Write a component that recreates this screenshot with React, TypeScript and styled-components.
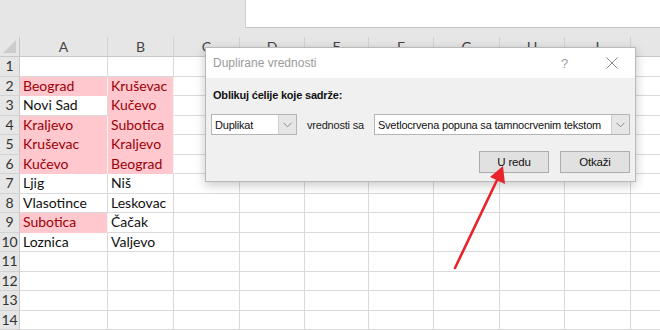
import React from "react";
import styled, { createGlobalStyle } from "styled-components";

const Global = createGlobalStyle`
  html, body { margin: 0; padding: 0; background: #fff; }
  * { box-sizing: border-box; }
`;

const Page = styled.div`
  position: relative;
  width: 660px;
  height: 330px;
  overflow: hidden;
  background: #fff;
  font-family: Lato, "Liberation Sans", sans-serif;
`;

const TopStrip = styled.div`
  height: 37px;
  background: #e6e6e6;
  display: flex;
  align-items: flex-start;
  padding-left: 245px;
`;

const FormulaBox = styled.div`
  flex: 1;
  height: 28px;
  background: #fff;
  border-left: 1px solid #cfcfcf;
  border-bottom: 1px solid #c6c6c6;
`;

const Sheet = styled.div`
  display: grid;
  grid-template-columns: 20px 88px 66px 66px 65px 64px 65px 66px 65px 66px 65px;
  grid-template-rows: 20px;
  grid-auto-rows: 19.5px;
`;

const Corner = styled.div`
  position: relative;
  background: #e6e6e6;
  border-right: 1px solid #c8c8c8;
  border-bottom: 1px solid #c8c8c8;
  &::after {
    content: "";
    position: absolute;
    right: 3px;
    bottom: 3px;
    width: 0;
    height: 0;
    border-left: 13px solid transparent;
    border-bottom: 13px solid #cdcdcd;
  }
`;

const ColHead = styled.div`
  background: #e6e6e6;
  border-right: 1px solid #d2d2d2;
  border-bottom: 1px solid #c8c8c8;
  color: #444;
  font-size: 14px;
  display: flex;
  align-items: center;
  justify-content: center;
  line-height: 1;
`;

const RowHead = styled.div`
  background: #e6e6e6;
  border-right: 1px solid #c8c8c8;
  border-bottom: 1px solid #d2d2d2;
  color: #333;
  font-size: 14px;
  display: flex;
  align-items: center;
  justify-content: center;
  line-height: 1;
`;

const Cell = styled.div<{ $pink?: boolean }>`
  background: ${(p) => (p.$pink ? "#ffc7ce" : "#fff")};
  color: ${(p) => (p.$pink ? "#9c0006" : "#111")};
  border-right: 1px solid ${(p) => (p.$pink ? "#f4f4f4" : "#dadada")};
  border-bottom: 1px solid ${(p) => (p.$pink ? "#ffc7ce" : "#dadada")};
  font-size: 14px;
  padding-left: 3px;
  display: flex;
  align-items: center;
  white-space: nowrap;
  overflow: hidden;
  line-height: 1;
`;

const Dialog = styled.div`
  position: absolute;
  left: 205px;
  top: 47px;
  width: 431px;
  height: 135px;
  background: #f0f0f0;
  border: 1px solid #b9b9b9;
  box-shadow: 0 3px 10px rgba(0, 0, 0, 0.22);
  display: flex;
  flex-direction: column;
  font-family: "Liberation Sans", Arial, sans-serif;
  font-size: 11px;
  letter-spacing: -0.2px;
`;

const TitleBar = styled.div`
  height: 30px;
  background: #fff;
  display: flex;
  align-items: center;
  padding: 0 0 0 7px;
`;

const Title = styled.div`
  flex: 1;
  color: #9a9a9a;
  font-size: 12px;
  letter-spacing: 0;
`;

const TitleIcon = styled.div`
  width: 47px;
  height: 30px;
  display: flex;
  align-items: center;
  justify-content: center;
  color: #a0a0a0;
  font-size: 13px;
`;

const Body = styled.div`
  flex: 1;
  display: flex;
  flex-direction: column;
  padding: 9px 4px 0 5px;
`;

const Label = styled.div`
  font-weight: bold;
  font-size: 11px;
  color: #111;
  height: 16px;
  line-height: 16px;
  padding-left: 2px;
`;

const SelectRow = styled.div`
  margin-top: 11px;
  display: flex;
  align-items: center;
  height: 21px;
`;

const Select = styled.div<{ $w: number }>`
  width: ${(p) => p.$w}px;
  flex-shrink: 0;
  height: 21px;
  background: #fff;
  border: 1px solid #b5b5b5;
  display: flex;
  align-items: stretch;
`;

const SelectText = styled.div`
  flex: 1;
  padding-left: 3px;
  display: flex;
  align-items: center;
  color: #111;
  white-space: nowrap;
  overflow: hidden;
`;

const SelectArrow = styled.div`
  width: 18px;
  background: #e6e6e6;
  border-left: 1px solid #cfcfcf;
  display: flex;
  align-items: center;
  justify-content: center;
`;

const Between = styled.div`
  padding: 0 10px;
  color: #222;
  white-space: nowrap;
  flex-shrink: 0;
`;

const Buttons = styled.div`
  margin-top: 16px;
  display: flex;
  justify-content: flex-end;
  gap: 11px;
  padding-right: 1px;
`;

const Button = styled.div`
  width: 70px;
  height: 22px;
  background: #e1e1e1;
  border: 1px solid #adadad;
  display: flex;
  align-items: center;
  justify-content: center;
  color: #111;
  font-size: 11.5px;
`;

const ArrowOverlay = styled.svg`
  position: absolute;
  left: 0;
  top: 0;
  pointer-events: none;
`;

const Chevron = () => (
  <svg width="9" height="6" viewBox="0 0 9 6">
    <path d="M0.5 0.8 L4.5 4.8 L8.5 0.8" fill="none" stroke="#8a8a8a" strokeWidth="1" />
  </svg>
);

const cols = ["A", "B", "C", "D", "E", "F", "G", "H", "I", ""];

type C = { t: string; p?: boolean };
const data: Record<number, [C, C]> = {
  2: [{ t: "Beograd", p: true }, { t: "Kruševac", p: true }],
  3: [{ t: "Novi Sad" }, { t: "Kučevo", p: true }],
  4: [{ t: "Kraljevo", p: true }, { t: "Subotica", p: true }],
  5: [{ t: "Kruševac", p: true }, { t: "Kraljevo", p: true }],
  6: [{ t: "Kučevo", p: true }, { t: "Beograd", p: true }],
  7: [{ t: "Ljig" }, { t: "Niš" }],
  8: [{ t: "Vlasotince" }, { t: "Leskovac" }],
  9: [{ t: "Subotica", p: true }, { t: "Čačak" }],
  10: [{ t: "Loznica" }, { t: "Valjevo" }],
};

export default function App() {
  const rows = Array.from({ length: 14 }, (_, i) => i + 1);
  return (
    <>
      <Global />
      <Page>
        <TopStrip>
          <FormulaBox />
        </TopStrip>
        <Sheet>
          <Corner />
          {cols.map((c, i) => (
            <ColHead key={i}>{c}</ColHead>
          ))}
          {rows.map((r) => (
            <React.Fragment key={r}>
              <RowHead>{r}</RowHead>
              {cols.map((c, ci) => {
                const d = data[r] && ci < 2 ? data[r][ci] : undefined;
                return (
                  <Cell key={ci} $pink={d?.p}>
                    {d?.t}
                  </Cell>
                );
              })}
            </React.Fragment>
          ))}
        </Sheet>

        <Dialog>
          <TitleBar>
            <Title>Duplirane vrednosti</Title>
            <TitleIcon>?</TitleIcon>
            <TitleIcon>
              <svg width="12" height="12" viewBox="0 0 12 12">
                <path d="M0.5 0.5 L11.5 11.5 M11.5 0.5 L0.5 11.5" stroke="#8a8a8a" strokeWidth="1" />
              </svg>
            </TitleIcon>
          </TitleBar>
          <Body>
            <Label>Oblikuj ćelije koje sadrže:</Label>
            <SelectRow>
              <Select $w={86}>
                <SelectText>Duplikat</SelectText>
                <SelectArrow>
                  <Chevron />
                </SelectArrow>
              </Select>
              <Between>vrednosti sa</Between>
              <Select $w={256}>
                <SelectText>Svetlocrvena popuna sa tamnocrvenim tekstom</SelectText>
                <SelectArrow>
                  <Chevron />
                </SelectArrow>
              </Select>
            </SelectRow>
            <Buttons>
              <Button>U redu</Button>
              <Button>Otkaži</Button>
            </Buttons>
          </Body>
        </Dialog>

        <ArrowOverlay width="660" height="330" viewBox="0 0 660 330">
          <line x1="455" y1="268" x2="498" y2="178" stroke="#e8242b" strokeWidth="2.6" strokeLinecap="round" />
          <polygon points="503,166 505,184 490,177" fill="#e8242b" />
        </ArrowOverlay>
      </Page>
    </>
  );
}
